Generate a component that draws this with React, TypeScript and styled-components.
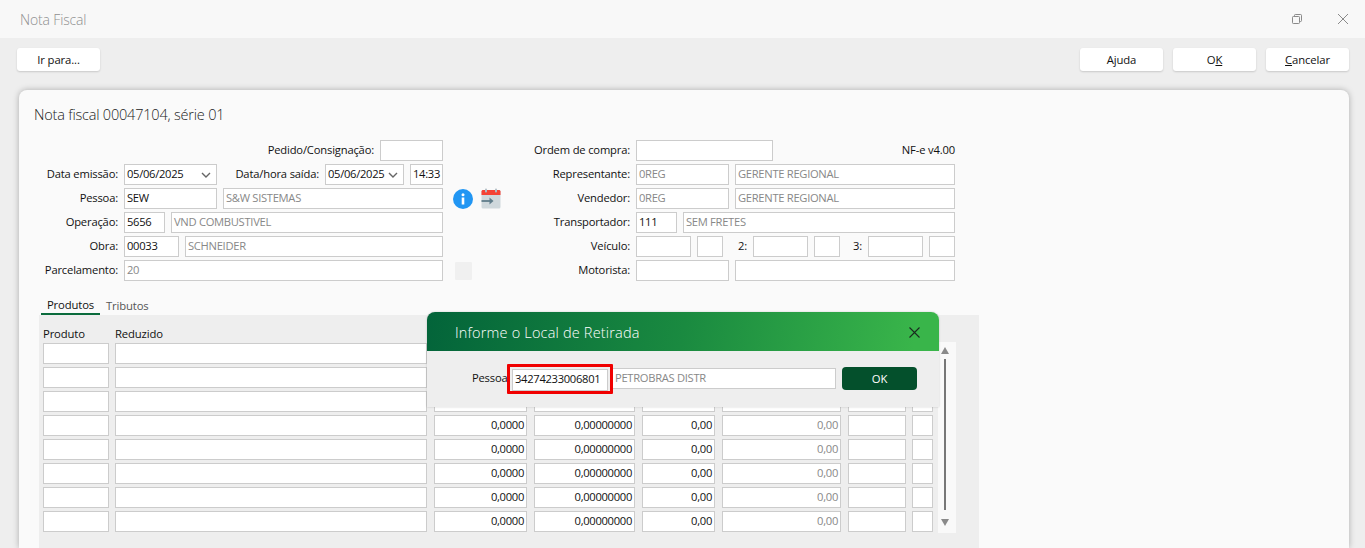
import React from "react";
import styled, { createGlobalStyle } from "styled-components";

const Global = createGlobalStyle`
  html, body { margin: 0; padding: 0; background: #eeeeee; }
  body { font-family: "Open Sans", "Noto Sans", sans-serif; font-size: 12px; color: #111; overflow: hidden; }
  * { box-sizing: border-box; }
`;

const Page = styled.div`
  position: relative; width: 1365px; height: 548px; overflow: hidden; background: #eeeeee;
  display: flex; flex-direction: column;
`;
const TitleBar = styled.header`
  height: 38px; background: #f8f8f8; display: flex; align-items: center; padding-left: 20px; flex: none; position: relative;
`;
const WindowTitle = styled.div`font-size: 14px; font-weight: 300; color: #8f8f8f; letter-spacing: -0.15px; margin-top: 1px;`;
const WinIcon = styled.svg<{ $x: number }>`
  position: absolute; left: ${p => p.$x}px; top: 13px; width: 12px; height: 12px; fill: none; stroke: #8a8a8a; stroke-width: 1;
`;
const Toolbar = styled.div`
  height: 52px; flex: none; padding: 10px 16px 0 17px; display: flex; gap: 10px;
`;
const Spacer = styled.div`flex: 1;`;
const ToolButton = styled.button`
  width: 83px; height: 23px; border: 0; border-radius: 3px; background: #fff; color: #111;
  box-shadow: 0 1px 2px rgba(0,0,0,.16); font: 500 11.3px "Open Sans", sans-serif; padding: 0;
  letter-spacing: -0.12px;
  u { text-underline-offset: 1px; }
`;
const Panel = styled.main`
  margin-left: 19px; width: 1330px; flex: 1; background: #fafafa; border-radius: 8px 8px 0 0;
  box-shadow: 0 0 6px rgba(0,0,0,.28); position: relative;
`;
const Heading = styled.h1`
  margin: 0; position: absolute; left: 15px; top: 14px; font-size: 14.5px; line-height: 22px; font-weight: 300; color: #222;
  letter-spacing: -0.2px;
`;
const FormArea = styled.div`
  position: absolute; left: 15px; top: 50px; display: flex;
`;
const Column = styled.div<{ $w: number }>`
  width: ${p => p.$w}px; display: flex; flex-direction: column; gap: 3px;
`;
const Row = styled.div<{ $end?: boolean }>`
  height: 21px; display: flex; gap: 6px; align-items: center; ${p => p.$end ? "justify-content: flex-end;" : ""}
`;
const Label = styled.label<{ $w?: number; $push?: boolean }>`
  ${p => p.$w ? `width: ${p.$w}px; text-align: right;` : ""}
  ${p => p.$push ? "margin-left: auto;" : ""}
  flex: none; font-size: 11.2px; letter-spacing: -0.17px; color: #111; white-space: nowrap; font-weight: 500; margin-top: -2px;
`;
const Field = styled.div<{ $w?: number; $dim?: boolean; $right?: boolean; $gap?: number }>`
  height: 21px; flex: ${p => p.$w ? "none" : "1"}; ${p => p.$w ? `width: ${p.$w}px;` : ""}
  ${p => p.$gap ? `margin-left: ${p.$gap}px;` : ""}
  background: #fff; border: 1px solid #cccccc; padding: 0 2px; line-height: 18px;
  font-size: 11.2px; letter-spacing: -0.3px; white-space: nowrap; overflow: hidden; position: relative;
  color: ${p => p.$dim ? "#888" : "#111"}; text-align: ${p => p.$right ? "right" : "left"};
`;
const Chevron = styled.svg`
  position: absolute; right: 5px; top: 6px; width: 10px; height: 8px; fill: none; stroke: #666; stroke-width: 1.4;
`;
const Version = styled.div`
  margin-left: auto; font-size: 11.2px; letter-spacing: -0.15px; font-weight: 500; color: #111; margin-top: -2px;
`;
const MiddleColumn = styled.div`width: 62px; position: relative;`;
const InfoIcon = styled.svg`position: absolute; left: 10px; top: 49px; width: 20px; height: 20px;`;
const CalendarIcon = styled.svg`position: absolute; left: 38px; top: 48px; width: 20px; height: 21px;`;
const Ghost = styled.div`position: absolute; left: 12px; top: 122px; width: 17px; height: 18px; background: #f0f0f0; border-radius: 1px;`;

const Tabs = styled.nav`
  position: absolute; left: 22px; top: 207px; height: 18px; display: flex; align-items: flex-start;
`;
const Tab = styled.div<{ $active?: boolean }>`
  height: 18px; font-size: 11.3px; line-height: 16px; letter-spacing: -0.15px; font-weight: 500;
  ${p => p.$active
    ? "width: 59px; text-align: center; color: #111; border-bottom: 2px solid #0a6b3c;"
    : "margin-left: 6px; color: #555; padding-top: 1px;"}
`;
const TableArea = styled.section`
  position: absolute; left: 20px; top: 225px; width: 940px; bottom: 0; background: #eeeeee; padding-left: 4px;
`;
const HeaderRow = styled.div`
  height: 28px; display: flex; align-items: center; font-size: 11.3px; letter-spacing: -0.15px; font-weight: 500; color: #111; padding-top: 9px;
`;
const HeaderCell = styled.div<{ $w: number }>`width: ${p => p.$w}px;`;
const GridRows = styled.div`display: flex; flex-direction: column; gap: 3px;`;
const GridRow = styled.div`display: flex; height: 21px;`;
const ScrollTrack = styled.div`
  position: absolute; left: 899px; top: 27px; width: 18px; height: 191px; background: #f9f9f9;
`;
const Arrow = styled.div<{ $down?: boolean }>`
  position: absolute; left: 3px; ${p => p.$down ? "bottom: 7px;" : "top: 5px;"}
  width: 0; height: 0; border-left: 4.5px solid transparent; border-right: 4.5px solid transparent;
  ${p => p.$down ? "border-top: 7px solid #8a8a8a;" : "border-bottom: 7px solid #8a8a8a;"}
`;
const Thumb = styled.div`position: absolute; left: 6px; top: 17px; width: 2px; height: 151px; background: #777;`;

const Dialog = styled.div`
  position: absolute; left: 427px; top: 312px; width: 512px; height: 95px; background: #eeeeee;
  border-radius: 8px 8px 0 0; box-shadow: 0 0 2px rgba(0,0,0,.22);
`;
const DialogHeader = styled.div`
  height: 39px; border-radius: 8px 8px 0 0; background: linear-gradient(100deg, #03643a 0%, #1a8a40 50%, #39b54a 95%);
  display: flex; align-items: center; padding-left: 28px; position: relative;
`;
const DialogTitle = styled.div`color: #fff; font-size: 14.5px; font-weight: 300; letter-spacing: 0.18px; margin-top: 1px;`;
const DialogClose = styled.svg`position: absolute; right: 19px; top: 15px; width: 11px; height: 11px; stroke: #1a2a20; stroke-width: 1.1; fill: none;`;
const DialogLabel = styled.label`
  position: absolute; left: 45px; top: 57px; font-size: 11.2px; letter-spacing: -0.2px; font-weight: 500; color: #111; line-height: 18px;
`;
const Highlight = styled.div`
  position: absolute; left: 80px; top: 52px; width: 106px; height: 30px; border: 3px solid #f00000; border-radius: 1px;
  background: #eee; padding: 2px 1px 2px 2px;
`;
const DialogInput = styled(Field)`
  width: 96px; height: 22px; line-height: 18px; padding: 0 2px; font-size: 11.2px; letter-spacing: -0.3px;
`;
const DialogDesc = styled(Field)`
  position: absolute; left: 185px; top: 56px; width: 224px;
`;
const DialogOk = styled.button`
  position: absolute; left: 415px; top: 55px; width: 75px; height: 23px; border: 0; border-radius: 4px;
  background: #04502c; color: #fff; font: 500 11.3px "Open Sans", sans-serif; padding: 0;
`;

const cols: { w: number; gap: number; value?: string; dim?: boolean }[] = [
  { w: 66, gap: 0 },
  { w: 312, gap: 6 },
  { w: 93, gap: 7, value: "0,0000" },
  { w: 101, gap: 7, value: "0,00000000" },
  { w: 73, gap: 7, value: "0,00" },
  { w: 119, gap: 7, value: "0,00", dim: true },
  { w: 58, gap: 7 },
  { w: 21, gap: 6 },
];
const rows = [0, 1, 2, 3, 4, 5, 6, 7];
const firstVisibleValueRow = 3;

const ChevronDown = () => (
  <Chevron viewBox="0 0 10 8"><path d="M1 2l4 4 4-4" /></Chevron>
);

export default function App() {
  return (
    <Page>
      <Global />
      <TitleBar>
        <WindowTitle>Nota Fiscal</WindowTitle>
        <WinIcon $x={1291} viewBox="0 0 12 12">
          <rect x="1.5" y="3.5" width="7" height="7" rx="0.8" />
          <path d="M3.5 3.5V2.3c0-.5.3-.8.8-.8h5.4c.5 0 .8.3.8.8v5.4c0 .5-.3.8-.8.8H8.5" />
        </WinIcon>
        <WinIcon $x={1337} viewBox="0 0 12 12"><path d="M1 1l10 10M11 1L1 11" /></WinIcon>
      </TitleBar>
      <Toolbar>
        <ToolButton>Ir para...</ToolButton>
        <Spacer />
        <ToolButton>Ajuda</ToolButton>
        <ToolButton>O<u>K</u></ToolButton>
        <ToolButton><u>C</u>ancelar</ToolButton>
      </Toolbar>
      <Panel>
        <Heading>Nota fiscal 00047104, série 01</Heading>
        <FormArea>
          <Column $w={409}>
            <Row $end>
              <Label>Pedido/Consignação:</Label>
              <Field $w={63} />
            </Row>
            <Row>
              <Label $w={84}>Data emissão:</Label>
              <Field $w={93}>05/06/2025<ChevronDown /></Field>
              <Label $push>Data/hora saída:</Label>
              <Field $w={79}>05/06/2025<ChevronDown /></Field>
              <Field $w={33}>14:33</Field>
            </Row>
            <Row>
              <Label $w={84}>Pessoa:</Label>
              <Field $w={93}>SEW</Field>
              <Field $dim>S&amp;W SISTEMAS</Field>
            </Row>
            <Row>
              <Label $w={84}>Operação:</Label>
              <Field $w={41}>5656</Field>
              <Field $dim>VND COMBUSTIVEL</Field>
            </Row>
            <Row>
              <Label $w={84}>Obra:</Label>
              <Field $w={55}>00033</Field>
              <Field $dim>SCHNEIDER</Field>
            </Row>
            <Row>
              <Label $w={84}>Parcelamento:</Label>
              <Field $dim>20</Field>
            </Row>
          </Column>
          <MiddleColumn>
            <InfoIcon viewBox="0 0 20 20">
              <circle cx="10" cy="10" r="10" fill="#2196f3" />
              <circle cx="10" cy="5.8" r="1.5" fill="#fff" />
              <rect x="8.7" y="8.5" width="2.6" height="7" fill="#fff" />
            </InfoIcon>
            <CalendarIcon viewBox="0 0 20 21">
              <rect x="0.5" y="2" width="19" height="18.5" rx="1.5" fill="#cfd8dc" />
              <path d="M0.5 7V3.5C0.5 2.7 1.2 2 2 2h16c.8 0 1.5.7 1.5 1.5V7z" fill="#f44336" />
              <rect x="4" y="0.5" width="2" height="4" rx="1" fill="#b0bec5" />
              <rect x="14" y="0.5" width="2" height="4" rx="1" fill="#b0bec5" />
              <path d="M0.5 13h9.5" stroke="#607d8b" strokeWidth="1.8" />
              <path d="M8.5 9.5l4 3.5-4 3.5z" fill="#607d8b" />
            </CalendarIcon>
            <Ghost />
          </MiddleColumn>
          <Column $w={450}>
            <Row>
              <Label $w={125}>Ordem de compra:</Label>
              <Field $w={137} />
              <Version>NF-e v4.00</Version>
            </Row>
            <Row>
              <Label $w={125}>Representante:</Label>
              <Field $w={93} $dim>0REG</Field>
              <Field $dim>GERENTE REGIONAL</Field>
            </Row>
            <Row>
              <Label $w={125}>Vendedor:</Label>
              <Field $w={93} $dim>0REG</Field>
              <Field $dim>GERENTE REGIONAL</Field>
            </Row>
            <Row>
              <Label $w={125}>Transportador:</Label>
              <Field $w={41}>111</Field>
              <Field $dim>SEM FRETES</Field>
            </Row>
            <Row>
              <Label $w={125}>Veículo:</Label>
              <Field $w={55} />
              <Field $w={26} />
              <Label $w={18}>2:</Label>
              <Field $w={55} />
              <Field $w={26} />
              <Label $w={16}>3:</Label>
              <Field $w={55} />
              <Field $w={26} />
            </Row>
            <Row>
              <Label $w={125}>Motorista:</Label>
              <Field $w={93} />
              <Field />
            </Row>
          </Column>
        </FormArea>
        <Tabs>
          <Tab $active>Produtos</Tab>
          <Tab>Tributos</Tab>
        </Tabs>
        <TableArea>
          <HeaderRow>
            <HeaderCell $w={72}>Produto</HeaderCell>
            <HeaderCell $w={300}>Reduzido</HeaderCell>
          </HeaderRow>
          <GridRows>
            {rows.map(r => (
              <GridRow key={r}>
                {cols.map((c, i) => (
                  <Field key={i} $w={c.w} $gap={c.gap} $right $dim={c.dim}>
                    {r >= firstVisibleValueRow ? c.value : null}
                  </Field>
                ))}
              </GridRow>
            ))}
          </GridRows>
          <ScrollTrack>
            <Arrow />
            <Thumb />
            <Arrow $down />
          </ScrollTrack>
        </TableArea>
      </Panel>
      <Dialog>
        <DialogHeader>
          <DialogTitle>Informe o Local de Retirada</DialogTitle>
          <DialogClose viewBox="0 0 11 11"><path d="M0.5 0.5l10 10M10.5 0.5l-10 10" /></DialogClose>
        </DialogHeader>
        <DialogLabel>Pessoa</DialogLabel>
        <DialogDesc $dim>PETROBRAS DISTR</DialogDesc>
        <Highlight>
          <DialogInput>34274233006801</DialogInput>
        </Highlight>
        <DialogOk>OK</DialogOk>
      </Dialog>
    </Page>
  );
}
